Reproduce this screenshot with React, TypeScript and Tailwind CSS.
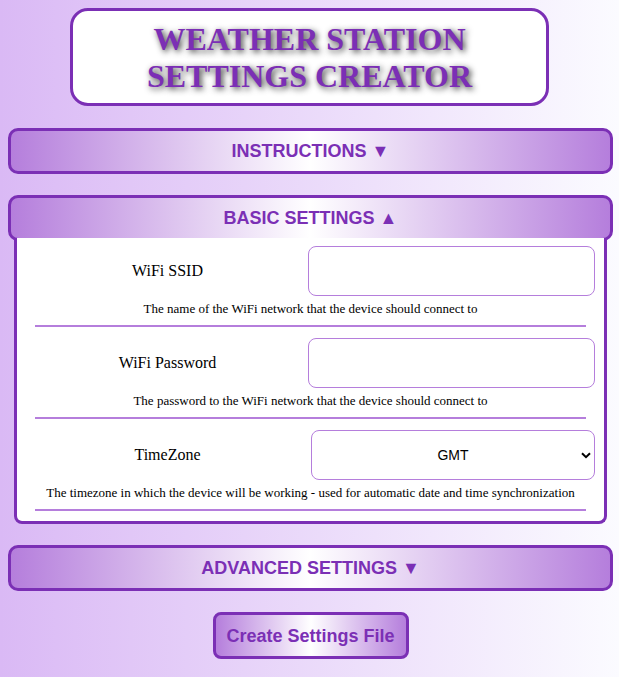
import React from "react";

const serif = { fontFamily: '"Liberation Serif", "Times New Roman", serif' };

function Header({ label }: { label: string }) {
  return (
    <div className="ml-2 w-[605px] h-[46px] pt-[1px] rounded-[10px] border-[3px] border-[#7b2fb5] bg-[linear-gradient(to_right,#b57edc,#ffffff_50%,#b57edc)] flex items-center justify-center font-['Liberation_Sans',Arial,sans-serif] text-[18px] font-bold text-[#7b2fb5]">
      {label}
    </div>
  );
}

function Row({
  label,
  desc,
  select,
}: {
  label: string;
  desc: string;
  select?: boolean;
}) {
  return (
    <div className="flex flex-col">
      <div className="flex items-center pl-[18px] pr-[9px]">
        <div className="w-[265px] text-center text-[16px] text-black" style={serif}>
          {label}
        </div>
        {select ? (
          <div className="relative ml-[11px] flex-1">
            <div className="h-[50px] rounded-[8px] border border-[#b57edc] bg-white flex items-center justify-center font-['Liberation_Sans',Arial,sans-serif] text-[14px] text-black">
              GMT
            </div>
            <svg
              className="absolute right-[4px] top-[22px]"
              width="10"
              height="7"
              viewBox="0 0 10 7"
            >
              <path d="M1 1.2 L5 5.2 L9 1.2" stroke="#000" strokeWidth="2" fill="none" />
            </svg>
          </div>
        ) : (
          <input
            className="ml-[8px] flex-1 h-[50px] rounded-[8px] border border-[#b57edc] bg-white outline-none"
            type="text"
          />
        )}
      </div>
      <div className="mt-[5px] text-center text-[13px] leading-[15px] text-black" style={serif}>
        {desc}
      </div>
      <div className="mx-[18px] mt-[9px] h-[2px] bg-[#b57edc]" />
    </div>
  );
}

export default function App() {
  return (
    <div className="min-h-[677px] w-full bg-[linear-gradient(to_right,#dab9f5,#fbfbff)] pt-2 pb-5">
      <div className="mx-auto w-[479px] rounded-[18px] border-[3px] border-[#7b2fb5] bg-white pt-[10px] pb-[8px] text-center">
        <h1
          className="text-[32px] font-bold leading-[37px] text-[#7b2fb5] [text-shadow:2px_2px_6px_#333]"
          style={serif}
        >
          WEATHER STATION
          <br />
          SETTINGS CREATOR
        </h1>
      </div>

      <div className="mt-[22px]">
        <Header label="INSTRUCTIONS ▼" />
      </div>

      <div className="mt-[21px]">
        <Header label="BASIC SETTINGS ▲" />
        <div className="ml-[14px] w-[593px] -mt-[3px] rounded-b-[8px] border-[3px] border-t-0 border-[#7b2fb5] bg-white pt-[8px] pb-[10px] flex flex-col gap-[11px]">
          <Row
            label="WiFi SSID"
            desc="The name of the WiFi network that the device should connect to"
          />
          <Row
            label="WiFi Password"
            desc="The password to the WiFi network that the device should connect to"
          />
          <Row
            label="TimeZone"
            select
            desc="The timezone in which the device will be working - used for automatic date and time synchronization"
          />
        </div>
      </div>

      <div className="mt-[21px]">
        <Header label="ADVANCED SETTINGS ▼" />
      </div>

      <div className="mt-[21px] flex justify-center pl-[2px]">
        <button className="h-[47px] w-[196px] pt-[1px] rounded-[8px] border-[3px] border-[#7b2fb5] bg-[linear-gradient(to_right,#b57edc,#ffffff_50%,#b57edc)] font-['Liberation_Sans',Arial,sans-serif] text-[18px] font-bold text-[#7b2fb5]">
          Create Settings File
        </button>
      </div>
    </div>
  );
}
